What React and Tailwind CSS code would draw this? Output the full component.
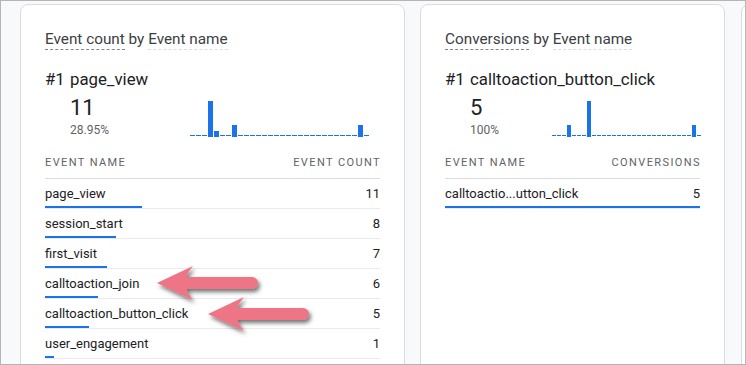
import React from "react";

const chart1 = Array.from({ length: 30 }, (_, i) => (i === 3 ? 6 : i === 4 ? 1 : i === 7 ? 2 : i === 28 ? 2 : 0));
const chart2 = Array.from({ length: 30 }, (_, i) => (i === 3 ? 1 : i === 7 ? 3 : i === 28 ? 1 : 0));

function Spark({ data, scale, slot }) {
  return (
    <div className="flex items-end h-[36px]">
      {data.map((v, i) => (
        <div key={i} className="flex items-end h-full" style={{ width: slot }}>
          <div
            className={v ? "bg-[#1a73e8] mr-[1px]" : "bg-[#1a73e8] mr-[1px] mb-[1px]"}
            style={{ height: v ? v * scale : 1, width: slot - 1 }}
          />
        </div>
      ))}
    </div>
  );
}

function Card({ title1, rank, value, pct, chart, colHeader, rows, total, chartClass, width }) {
  return (
    <div className={`${width} shrink-0 h-[420px] bg-white border border-[#dadce0] rounded-lg px-6 pt-[25px]`}>
      <div className="flex text-[15.3px] leading-[19px] text-[#3c4043]">
        <span className="border-b border-dashed border-[#80868b]">{title1}</span>
        <span className="border-b border-transparent">&nbsp;by&nbsp;</span>
        <span className="border-b border-dashed border-[#dadce0]">Event name</span>
      </div>
      <div className="mt-[17px] flex text-[16.8px] leading-6 text-[#202124]">
        <span className="w-[25px]">#1</span>
        <span>{rank}</span>
      </div>
      <div className="flex items-end">
        <div className="ml-[25px] mt-[3px]">
          <div className="text-[22px] leading-[28px] text-[#202124]">{value}</div>
          <div className="text-[12px] leading-4 text-[#5f6368]">{pct}</div>
        </div>
        <div className={`ml-auto mb-[1px] ${chartClass}`}>{chart}</div>
      </div>
      <div className="mt-[17px] flex justify-between pb-[7px] border-b border-[#dadce0] text-[11px] leading-4 tracking-[1.4px] text-[#5f6368]">
        <span>EVENT NAME</span>
        <span className="mr-[-1px]">{colHeader}</span>
      </div>
      {rows.map(([name, n]) => (
        <div key={name} className="border-b border-[#e8eaed] pt-[5px]">
          <div className="flex justify-between text-[13px] leading-5 text-[#202124]">
            <span>{name}</span>
            <span>{n}</span>
          </div>
          <div className="mt-[2px] h-[2px] bg-[#1a73e8]" style={{ width: `${(n / total) * 100}%` }} />
        </div>
      ))}
    </div>
  );
}

export default function App() {
  return (
    <div className="relative w-[746px] h-[365px] border border-[#b5b5b5] bg-[#f8f9fa] overflow-hidden font-['Roboto',sans-serif]">
      <div className="flex pl-[19px] pt-[3px]">
        <Card
          width="w-[385px]"
          title1="Event count"
          rank="page_view"
          value="11"
          pct="28.95%"
          chart={<Spark data={chart1} scale={6} slot={6} />}
          chartClass="mr-[10px]"
          colHeader="EVENT COUNT"
          total={38}
          rows={[
            ["page_view", 11],
            ["session_start", 8],
            ["first_visit", 7],
            ["calltoaction_join", 6],
            ["calltoaction_button_click", 5],
            ["user_engagement", 1],
          ]}
        />
        <div className="w-[15px] shrink-0" />
        <Card
          width="w-[305px]"
          title1="Conversions"
          rank="calltoaction_button_click"
          value="5"
          pct="100%"
          chart={<Spark data={chart2} scale={12} slot={5} />}
          chartClass="mr-[-2px]"
          colHeader="CONVERSIONS"
          total={5}
          rows={[["calltoactio...utton_click", 5]]}
        />
        <div className="w-[16px] shrink-0" />
        <div className="w-[300px] shrink-0 h-[420px] bg-white border border-[#dadce0] rounded-lg" />
      </div>
      <svg className="absolute left-[-1px] top-[-1px]" width="746" height="365" viewBox="0 0 746 365">
        <defs>
          <filter id="sh" x="-20%" y="-40%" width="140%" height="180%">
            <feDropShadow dx="2" dy="3" stdDeviation="2" floodColor="#000" floodOpacity="0.55" />
          </filter>
        </defs>
        <g fill="#ed7486" filter="url(#sh)">
          <path d="M157 283 L193 266 Q188 272 186 277 L252 277 A6 6 0 0 1 252 289 L186 289 Q188 294 193 300 Z" />
          <path d="M208 314 L244 297 Q239 303 237 308 L303 308 A6 6 0 0 1 303 320 L237 320 Q239 325 244 331 Z" />
        </g>
      </svg>
    </div>
  );
}
